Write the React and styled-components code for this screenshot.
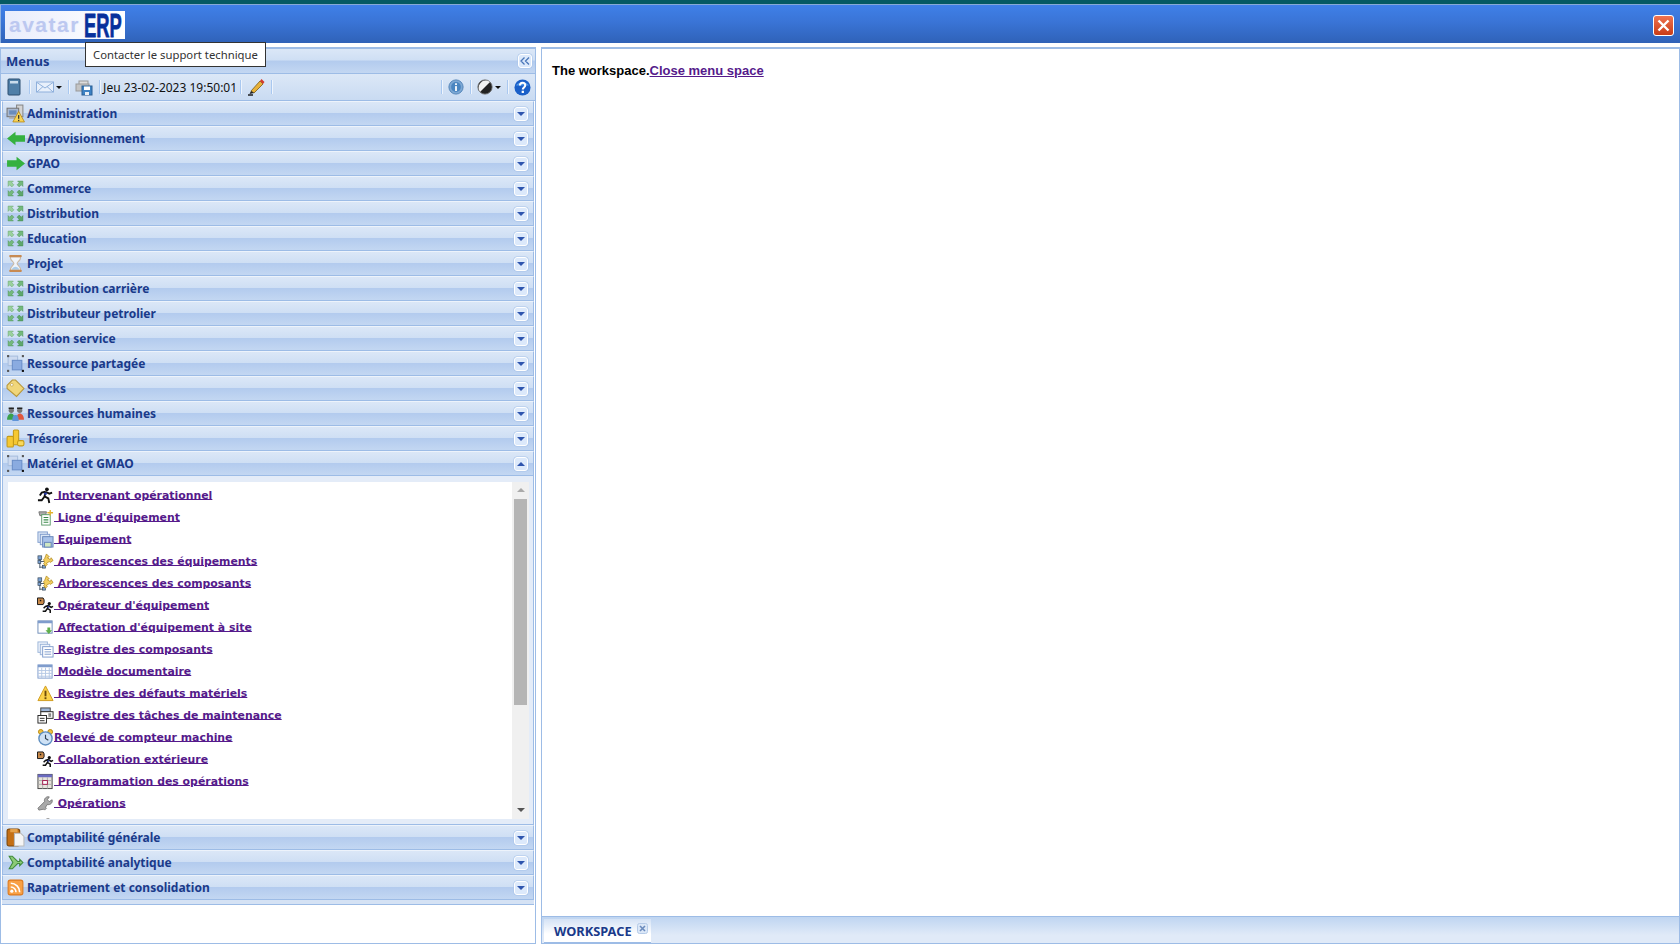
import React from 'react';
import styled, { createGlobalStyle } from 'styled-components';

const GlobalStyle = createGlobalStyle`
  html, body {
    margin: 0;
    padding: 0;
    height: 100%;
    overflow: hidden;
    background: #fff;
  }
`;

const stripe = 'linear-gradient(180deg, #dbe7f7 0%, #cfdff4 46%, #b3cbee 50%, #c3d7f2 100%)';

const Page = styled.div`
  position: relative;
  display: flex;
  flex-flow: column;
  width: 1680px;
  height: 944px;
  overflow: hidden;
  background: #fff;
  font-family: 'Noto Sans', sans-serif;
`;

const TopStrip = styled.div`
  flex: none;
  height: 4px;
  border-bottom: 1px solid #86a9d6;
  background: #055a63;
`;

const Banner = styled.div`
  flex: none;
  display: flex;
  align-items: center;
  justify-content: space-between;
  box-sizing: border-box;
  height: 38px;
  padding: 4px 6px 2px 4px;
  border-left: 1px solid #8fb2e2;
  background: linear-gradient(180deg, #3f80e8 0%, #3a74d6 45%, #2f62b8 100%);
`;

const Logo = styled.div`
  display: flex;
  align-items: center;
  box-sizing: border-box;
  width: 120px;
  height: 28px;
  padding-left: 4px;
  background: linear-gradient(90deg, #e9edfc, #fff);
`;

const LogoSoft = styled.span`
  flex: none;
  width: 75px;
  font-family: 'Liberation Sans', sans-serif;
  font-size: 21px;
  font-weight: 700;
  letter-spacing: 1.5px;
  line-height: 28px;
  color: #bcc8f0;
  text-shadow: 0 0 2px #e4e9fb;
`;

const LogoHard = styled.span`
  flex: none;
  width: 38px;
  font-family: 'Liberation Sans', sans-serif;
  font-size: 34px;
  font-weight: 700;
  line-height: 28px;
  color: #07309c;
  -webkit-text-stroke: 0.8px #07309c;
  transform: scaleX(0.54);
  transform-origin: left center;
`;

const CloseButton = styled.div`
  display: flex;
  align-items: center;
  justify-content: center;
  width: 19px;
  height: 19px;
  border: 1px solid #fff;
  border-radius: 3px;
  background: linear-gradient(180deg, #ef7350, #c93c16);
`;

const Gap = styled.div`
  flex: none;
  height: 4px;
  background: #fff;
`;

const Main = styled.div`
  flex: 1;
  display: flex;
  min-height: 0;
`;

const LeftPanel = styled.aside`
  flex: none;
  display: flex;
  flex-flow: column;
  box-sizing: border-box;
  width: 536px;
  border: 1px solid #9dbce6;
  border-top: 0;
  background: #fff;
`;

const PanelHeader = styled.div`
  flex: none;
  display: flex;
  align-items: center;
  justify-content: space-between;
  box-sizing: border-box;
  height: 27px;
  padding: 0 3px 0 5px;
  border-top: 2px solid #9dbce6;
  border-bottom: 1px solid #9dbce6;
  background: ${stripe};
`;

const PanelTitle = styled.span`
  font-size: 13px;
  font-weight: 700;
  color: #1a3a8a;
`;

const Toolbar = styled.div`
  flex: none;
  display: flex;
  align-items: center;
  box-sizing: border-box;
  height: 27px;
  padding: 0 4px;
  border-bottom: 1px solid #9dbce6;
  background: linear-gradient(180deg, #dce8f7, #c9dbf2);
`;

const ToolGroup = styled.div`
  display: flex;
  align-items: center;
  gap: ${p => p.$gap || 6}px;
  margin-left: ${p => (p.$push ? 'auto' : '0')};
`;

const ToolSep = styled.span`
  width: 1px;
  height: 14px;
  background: #a9c8f0;
  box-shadow: 1px 0 0 #eef4fc;
`;

const DateText = styled.span`
  font-size: 12px;
  color: #111;
  white-space: nowrap;
`;

const Caret = styled.span`
  width: 0;
  height: 0;
  margin-left: -1px;
  border: 3px solid transparent;
  border-top: 3px solid #111;
  border-bottom: 0;
`;

const Row = styled.div`
  flex: none;
  display: flex;
  align-items: center;
  box-sizing: border-box;
  height: 25px;
  margin: 0 1px;
  padding: 0 5px 0 3px;
  border: 1px solid #9dbce6;
  border-top-color: #edf3fb;
  background: ${stripe};
`;

const RowIcon = styled.span`
  flex: none;
  display: flex;
  width: 19px;
  height: 19px;
  margin-right: 2px;
`;

const RowTitle = styled.span`
  flex: 1;
  font-size: 12px;
  font-weight: 700;
  color: #1a3a8a;
  white-space: nowrap;
`;

const ArrowButton = styled.span`
  flex: none;
  display: flex;
  align-items: center;
  justify-content: center;
  box-sizing: border-box;
  width: 14px;
  height: 14px;
  border: 1px solid #fff;
  border-radius: 3px;
  background: #dce9fb;
  box-shadow: 0 0 0 0.5px #a8c4ea;
`;

const ArrowDown = styled.span`
  width: 0;
  height: 0;
  border: 4px solid transparent;
  border-bottom: 0;
  border-top: 4px solid #2e55ae;
`;

const ArrowUp = styled.span`
  width: 0;
  height: 0;
  border: 4px solid transparent;
  border-top: 0;
  border-bottom: 4px solid #2e55ae;
`;

const MenuBody = styled.div`
  flex: none;
  display: flex;
  box-sizing: border-box;
  height: 349px;
  margin: 0 1px;
  padding: 6px 4px 5px 5px;
  border: 1px solid #9dbce6;
  border-top: 0;
  background: #e4ecf8;
`;

const ListClip = styled.div`
  flex: 1;
  min-width: 0;
  overflow: hidden;
  background: #fff;
`;

const MenuList = styled.ul`
  margin: 0;
  padding: 2px 0 0 29px;
  list-style: none;
`;

const MenuItem = styled.li`
  display: flex;
  align-items: center;
  height: 22px;
`;

const ItemLink = styled.a`
  font-family: 'DejaVu Sans', sans-serif;
  font-size: 10.9px;
  font-weight: 700;
  color: #551a8b;
  text-decoration: underline;
  white-space: pre;
`;

const ItemIcon = styled.span`
  display: inline-flex;
  width: 17px;
  height: 17px;
  vertical-align: middle;
`;

const ScrollTrack = styled.div`
  flex: none;
  display: flex;
  flex-flow: column;
  align-items: center;
  box-sizing: border-box;
  width: 17px;
  padding: 6px 0 7px;
  background: #f0f0f0;
`;

const ScrollThumb = styled.div`
  width: 13px;
  height: 206px;
  margin-top: 7px;
  background: #b5b5b5;
`;

const ScrollUp = styled.span`
  width: 0;
  height: 0;
  border: 4px solid transparent;
  border-top: 0;
  border-bottom: 4px solid #aaa;
`;

const ScrollDown = styled.span`
  width: 0;
  height: 0;
  margin-top: auto;
  border: 4px solid transparent;
  border-bottom: 0;
  border-top: 4px solid #555;
`;

const PanelFoot = styled.div`
  flex: none;
  height: 4px;
  margin: 0 1px;
  background: #d5e2f4;
  border-bottom: 1px solid #9dbce6;
`;

const Gutter = styled.div`
  flex: none;
  width: 5px;
`;

const Workspace = styled.main`
  flex: 1;
  display: flex;
  flex-flow: column;
  min-width: 0;
  border: 1px solid #9dbce6;
  border-top: 2px solid #9dbce6;
`;

const WorkspaceBody = styled.div`
  flex: 1;
  padding: 14px 10px;
  font-family: 'Liberation Sans', sans-serif;
  font-size: 13px;
  font-weight: 700;
  line-height: 16px;
  color: #000;
`;

const WorkspaceLink = styled.a`
  color: #551a8b;
  text-decoration: underline;
`;

const TabBar = styled.div`
  flex: none;
  display: flex;
  align-items: flex-end;
  box-sizing: border-box;
  height: 27px;
  padding: 2px 0 0 2px;
  border-top: 1px solid #9dbce6;
  background: linear-gradient(180deg, #bfd5f1, #e0eaf8 70%);
`;

const Tab = styled.div`
  display: flex;
  align-items: center;
  box-sizing: border-box;
  width: 107px;
  height: 24px;
  padding: 1px 0 0 10px;
  border-bottom: 1px solid #9dbce6;
  background: linear-gradient(180deg, #d4e2f5, #fff 65%);
`;

const TabTitle = styled.span`
  font-size: 12.8px;
  font-weight: 700;
  color: #1a3a8a;
`;

const TabClose = styled.span`
  display: flex;
  margin: -6px 0 0 5px;
`;

const Tooltip = styled.div`
  position: absolute;
  top: 42px;
  left: 85px;
  box-sizing: border-box;
  height: 25px;
  padding: 0 7px;
  border: 1px solid #333;
  background: #fff;
  font-size: 11.3px;
  line-height: 23px;
  color: #333;
  white-space: nowrap;
`;

const Svg = ({ children, size = 18 }) => (
  <svg width={size} height={size} viewBox="0 0 18 18" xmlns="http://www.w3.org/2000/svg">
    {children}
  </svg>
);

const drawings = {
  book: (
    <>
      <rect x="3" y="1" width="12" height="16" rx="1" fill="#4f7fa8" stroke="#2d4f70" />
      <rect x="5" y="3" width="8" height="2.5" fill="#c9dcec" />
    </>
  ),
  mail: (
    <>
      <rect x="0.5" y="4" width="17" height="10" fill="#e8f0fb" stroke="#8fb0dc" />
      <path d="M1 4.5 9 10l8-5.5M1 14l6-5.5M17 14l-6-5.5" fill="none" stroke="#8fb0dc" />
    </>
  ),
  print: (
    <>
      <rect x="4" y="3" width="9" height="4" fill="#ddd" stroke="#999" />
      <rect x="1" y="6" width="13" height="7" fill="#c4c4c4" stroke="#999" />
      <rect x="7" y="8" width="10" height="9" fill="#3d82c4" stroke="#2b5f94" />
      <rect x="9" y="8.5" width="6" height="3.5" fill="#fff" />
      <rect x="10" y="14" width="4" height="3" fill="#e8eef5" />
    </>
  ),
  pencil: (
    <>
      <path d="M4 13 13 3l3 3-9 9z" fill="#e8b23a" stroke="#7a5a16" strokeWidth="0.8" />
      <path d="M13 3l3 3 1.500-2-3-3z" fill="#d43b2c" />
      <path d="M1 17h5" stroke="#111" strokeWidth="1.4" />
      <path d="M2.500 16 4 13l3 2z" fill="#222" />
    </>
  ),
  info: (
    <>
      <circle cx="9" cy="9" r="8" fill="#7da8d4" stroke="#4d7fb5" />
      <circle cx="9" cy="9" r="5.500" fill="#4a85c0" />
      <rect x="8" y="8" width="2" height="5.500" fill="#fff" />
      <rect x="8" y="4.800" width="2" height="2" fill="#fff" />
    </>
  ),
  contrast: (
    <>
      <circle cx="9" cy="9" r="8" fill="#222" stroke="#666" />
      <path d="M3.400 14.600A8 8 0 0 1 14.600 3.400z" fill="#f2f2f2" />
    </>
  ),
  help: (
    <>
      <circle cx="9" cy="9" r="8.500" fill="#1a5fc8" />
      <path d="M2 7a7.500 5 0 0 1 14 0z" fill="#4d94e6" />
      <path d="M6.300 7c0-4 5.600-4 5.600-.4 0 2.300-2.600 2.400-2.600 4.400" fill="none" stroke="#fff" strokeWidth="2.200" />
      <rect x="8.100" y="12.400" width="2.400" height="2.400" fill="#fff" />
    </>
  ),
  admin: (
    <>
      <rect x="10" y="1" width="6" height="11" fill="#d4d4d4" stroke="#888" />
      <rect x="1" y="4" width="11" height="8" fill="#a8b8d0" stroke="#777" />
      <rect x="3" y="6" width="7" height="4" fill="#6a8cbc" />
      <rect x="3" y="12" width="7" height="2" fill="#aaa" />
      <path d="M12 7l5.500 10h-11z" fill="#f8d456" stroke="#b88a18" strokeWidth="0.8" />
      <rect x="11.400" y="10.500" width="1.200" height="3.500" fill="#333" />
      <rect x="11.400" y="15" width="1.200" height="1.200" fill="#333" />
    </>
  ),
  left: <path d="M1 9 9 2.500V6h9v6H9v3.500z" fill="#35b13f" />,
  right: <path d="M18 9 10 2.500V6H1v6h9v3.500z" fill="#35b13f" />,
  arrows: (
    <>
      <path d="M2 2h5L5.500 3.500l2 2-2 2-2-2L2 7z" fill="#9ad19d" stroke="#6aa870" strokeWidth="0.5" />
      <path d="M16 2h-5l1.500 1.500-2 2 2 2 2-2L16 7z" fill="#74b97c" stroke="#4e9459" strokeWidth="0.5" />
      <path d="M2 16h5l-1.500-1.500 2-2-2-2-2 2L2 11z" fill="#74b97c" stroke="#4e9459" strokeWidth="0.5" />
      <path d="M16 16h-5l1.500-1.500-2-2 2-2 2 2L16 11z" fill="#5ea76b" stroke="#3f8a4b" strokeWidth="0.5" />
    </>
  ),
  hourglass: (
    <>
      <path d="M4 2.500h10c0 4-3.500 5-3.500 6.500s3.500 2.500 3.500 6.500H4c0-4 3.500-5 3.500-6.500S4 6.500 4 2.500z" fill="#f0f4fa" stroke="#c8b8a4" />
      <path d="M5.500 15c0-2 2.500-3 3.500-3s3.500 1 3.500 3z" fill="#a8cbea" />
      <rect x="3" y="1" width="12" height="2" rx="1" fill="#c78a52" />
      <rect x="3" y="15" width="12" height="2" rx="1" fill="#c78a52" />
    </>
  ),
  resource: (
    <>
      <rect x="2" y="2" width="9" height="9" fill="#ccdaf0" stroke="#a8bedd" />
      <rect x="6" y="6" width="9" height="9" fill="#8aabe0" stroke="#6a8ec8" />
      <rect x="1" y="1" width="2" height="2" fill="#555" />
      <rect x="15" y="1" width="2" height="2" fill="#555" />
      <rect x="1" y="15" width="2" height="2" fill="#555" />
      <rect x="15" y="15" width="2" height="2" fill="#111" />
    </>
  ),
  tag: (
    <>
      <path d="M1 6 6 1h3l8 8-7 7.500L1 9z" fill="#f0d67a" stroke="#b8973a" />
      <circle cx="5.500" cy="5.500" r="1.300" fill="#fff" stroke="#b8973a" strokeWidth="0.6" />
    </>
  ),
  people: (
    <>
      <circle cx="5" cy="6" r="2.500" fill="#777" />
      <circle cx="13" cy="6" r="2.500" fill="#777" />
      <path d="M2.500 4h5M10.500 4h5" stroke="#222" strokeWidth="1.500" />
      <path d="M1 15c0-4 2-6 4-6s3 2 3 6z" fill="#3aa14a" />
      <path d="M10 15c0-4 1-6 3-6s4 2 4 6z" fill="#e0563c" />
      <path d="M6 16c0-4 1-5.500 3-5.500s3 1.500 3 5.500z" fill="#5f94d8" />
    </>
  ),
  coins: (
    <>
      <rect x="7" y="1" width="5" height="14" rx="1" fill="#f6c832" stroke="#c49a18" />
      <rect x="1" y="7" width="6" height="10" rx="1" fill="#f6c832" stroke="#c49a18" />
      <rect x="11" y="11" width="6" height="5" rx="1.500" fill="#f9d95c" stroke="#c49a18" />
    </>
  ),
  ledger: (
    <>
      <rect x="1" y="1" width="12" height="16" rx="2" fill="#c46f14" stroke="#7d4708" />
      <rect x="4" y="1" width="7" height="3" fill="#e6a24a" />
      <path d="M8 5h6l3 3v9H8z" fill="#f5f5f5" stroke="#bbb" />
    </>
  ),
  branch: (
    <path d="M3 3h3l5 5h2V6l3 3-3 3v-2h-2l-5 5H3l3.500-6L3 3z" fill="#8ccb78" stroke="#3f8a3a" strokeWidth="1" />
  ),
  rss: (
    <>
      <rect x="2" y="2" width="14" height="14" rx="2" fill="#f8a045" stroke="#dd7a1f" />
      <circle cx="5.500" cy="12.500" r="1.500" fill="#fff" />
      <path d="M4.500 8.500a5 5 0 0 1 5 5M4.500 5a8.500 8.500 0 0 1 8.500 8.500" fill="none" stroke="#fff" strokeWidth="1.500" />
    </>
  ),
  runner: (
    <>
      <circle cx="10.500" cy="2.500" r="2" fill="#111" />
      <path d="M9 5 5 6 3 9M9 5l4 2 3-1M9 5l-1 5 4 2 1 5M8 10l-3 4H1" fill="none" stroke="#111" strokeWidth="2" />
      <path d="M7.500 7h3" stroke="#2b3fae" strokeWidth="2" />
    </>
  ),
  trash: (
    <>
      <path d="M2 3h8l-1 4H3z" fill="#aaa" stroke="#777" />
      <rect x="5" y="6" width="9" height="11" fill="#fff" stroke="#5c9a6a" />
      <path d="M7 9h5M7 11.500h5M7 14h5" stroke="#3a8a4a" strokeWidth="1.200" />
      <path d="M14 1v6M11 4h6" stroke="#e3b32c" strokeWidth="1.400" />
    </>
  ),
  stackSave: (
    <>
      <rect x="1" y="1" width="10" height="11" fill="#dbe6f5" stroke="#7f9ccc" />
      <rect x="3.500" y="3.500" width="10" height="11" fill="#dbe6f5" stroke="#7f9ccc" />
      <rect x="6" y="6" width="11" height="11" fill="#a8c2ea" stroke="#6484b8" />
      <rect x="8" y="12" width="7" height="5" fill="#cfe7c2" stroke="#6484b8" />
    </>
  ),
  tree: (
    <>
      <path d="M3 5v11M3 9h5M3 15h5" stroke="#456" fill="none" />
      <rect x="1" y="3" width="4" height="4" fill="#7aa0d0" stroke="#345" strokeWidth="0.7" />
      <rect x="1" y="8" width="3" height="3" fill="#7aa0d0" stroke="#345" strokeWidth="0.7" />
      <rect x="6" y="13" width="3" height="3" fill="#7aa0d0" stroke="#345" strokeWidth="0.7" />
      <path d="M10 1l3 3-2 1 3 2 1-2 2 3-3 2-1-1-3 2 1 1-2 2-2-3 1-1-1-3 1-1z" fill="#f3cf62" stroke="#b28a1e" strokeWidth="0.8" />
    </>
  ),
  operator: (
    <>
      <path d="M0.500 1h6l1 2v3l-1 2h-6z" fill="#c98a4a" stroke="#111" />
      <rect x="3" y="3" width="1.500" height="1.500" fill="#111" />
      <circle cx="13" cy="7" r="1.700" fill="#111" />
      <path d="M12 9l-3 1-2 2M12 9l3 2 2-1M12 9l-1 3 3 2v3M11 12l-2 3H6" fill="none" stroke="#111" strokeWidth="1.600" />
      <path d="M11 10.500h2" stroke="#2b3fae" strokeWidth="1.500" />
    </>
  ),
  windowDown: (
    <>
      <rect x="1" y="2" width="15" height="13" fill="#fff" stroke="#6d8cb8" />
      <rect x="1" y="2" width="15" height="2.500" fill="#7f9ccc" />
      <path d="M11 9h3v3h2l-3.500 4L9 12h2z" fill="#5fae4a" />
    </>
  ),
  stackTable: (
    <>
      <rect x="1" y="1" width="10" height="11" fill="#eef3fb" stroke="#9bb4d8" />
      <rect x="3.500" y="3.500" width="10" height="11" fill="#eef3fb" stroke="#9bb4d8" />
      <rect x="6" y="6" width="11" height="11" fill="#fff" stroke="#7f9ccc" />
      <path d="M8 9h7M8 11.500h7M8 14h7" stroke="#7f9ccc" />
    </>
  ),
  table: (
    <>
      <rect x="1" y="2" width="15" height="14" fill="#fff" stroke="#7f9ccc" />
      <rect x="1" y="2" width="15" height="2.500" fill="#7f9ccc" />
      <path d="M1 8h15M1 11h15M1 14h15M5 5v11M9 5v11M13 5v11" stroke="#b5c8e4" />
    </>
  ),
  warning: (
    <>
      <path d="M9 1l8 15.500H1z" fill="#fbd24a" stroke="#cf9a1c" strokeLinejoin="round" />
      <rect x="8" y="6" width="2" height="6" fill="#6b4a0a" />
      <rect x="8" y="13" width="2" height="2" fill="#6b4a0a" />
    </>
  ),
  tasks: (
    <>
      <rect x="4" y="1" width="10" height="4" fill="#9db5d8" stroke="#444" />
      <rect x="4" y="5" width="13" height="7" fill="#fff" stroke="#222" />
      <rect x="1" y="9" width="9" height="8" fill="#fff" stroke="#222" />
      <path d="M3 12h5M3 14.500h5M12 7.500h3M12 9.500h3" stroke="#222" />
    </>
  ),
  clock: (
    <>
      <circle cx="4" cy="3" r="2.500" fill="#f0c040" stroke="#b98a10" />
      <circle cx="14" cy="3" r="2.500" fill="#f0c040" stroke="#b98a10" />
      <circle cx="9" cy="10" r="7" fill="#cfe2f5" stroke="#5f8fc0" strokeWidth="1.500" />
      <path d="M9 6v4l3 2" fill="none" stroke="#345" strokeWidth="1.200" />
    </>
  ),
  calendar: (
    <>
      <rect x="1" y="1.500" width="15" height="15" fill="#e8e4dc" stroke="#444" />
      <rect x="1" y="1.500" width="15" height="3" fill="#6a6ac0" />
      <path d="M1 8h15M1 12h15M6 4.500v12M11 4.500v12" stroke="#aaa" />
      <rect x="6" y="8" width="5" height="4" fill="#fff" stroke="#a3174a" />
    </>
  ),
  wrench: (
    <path d="M2 16l-1-2 7-7c-1-3 2-6 5-5l-2 3 2 2 3-2c1 3-2 6-5 5l-2 3 1 1-2 2-1-1z" fill="#aaa" stroke="#666" strokeWidth="0.8" />
  ),
};

const Drawing = ({ name, size }) => <Svg size={size}>{drawings[name]}</Svg>;

const topRows = [
  ['Administration', 'admin'],
  ['Approvisionnement', 'left'],
  ['GPAO', 'right'],
  ['Commerce', 'arrows'],
  ['Distribution', 'arrows'],
  ['Education', 'arrows'],
  ['Projet', 'hourglass'],
  ['Distribution carrière', 'arrows'],
  ['Distributeur petrolier', 'arrows'],
  ['Station service', 'arrows'],
  ['Ressource partagée', 'resource'],
  ['Stocks', 'tag'],
  ['Ressources humaines', 'people'],
  ['Trésorerie', 'coins'],
];

const bottomRows = [
  ['Comptabilité générale', 'ledger'],
  ['Comptabilité analytique', 'branch'],
  ['Rapatriement et consolidation', 'rss'],
];

const items = [
  [' Intervenant opérationnel', 'runner'],
  [" Ligne d'équipement", 'trash'],
  [' Equipement', 'stackSave'],
  [' Arborescences des équipements', 'tree'],
  [' Arborescences des composants', 'tree'],
  [" Opérateur d'équipement", 'operator'],
  [" Affectation d'équipement à site", 'windowDown'],
  [' Registre des composants', 'stackTable'],
  [' Modèle documentaire', 'table'],
  [' Registre des défauts matériels', 'warning'],
  [' Registre des tâches de maintenance', 'tasks'],
  ['Relevé de compteur machine', 'clock'],
  [' Collaboration extérieure', 'operator'],
  [' Programmation des opérations', 'calendar'],
  [' Opérations', 'wrench'],
];

const AccordionRow = ({ title, icon, open }) => (
  <Row>
    <RowIcon>
      <Drawing name={icon} size={19} />
    </RowIcon>
    <RowTitle>{title}</RowTitle>
    <ArrowButton>{open ? <ArrowUp /> : <ArrowDown />}</ArrowButton>
  </Row>
);

const App = () => {
  return (
    <Page>
      <GlobalStyle />
      <TopStrip />
      <Banner>
        <Logo>
          <LogoSoft>avatar</LogoSoft>
          <LogoHard>ERP</LogoHard>
        </Logo>
        <CloseButton>
          <svg width="13" height="13" viewBox="0 0 13 13">
            <path d="M1.500 1.500l10 10M11.500 1.500l-10 10" stroke="#fff" strokeWidth="2.400" />
          </svg>
        </CloseButton>
      </Banner>
      <Gap />
      <Main>
        <LeftPanel>
          <PanelHeader>
            <PanelTitle>Menus</PanelTitle>
            <ArrowButton>
              <svg width="10" height="10" viewBox="0 0 10 10">
                <path d="M4.500 1.500 1 5l3.500 3.500M9 1.500 5.500 5 9 8.500" fill="none" stroke="#4a76b8" strokeWidth="1.300" />
              </svg>
            </ArrowButton>
          </PanelHeader>
          <Toolbar>
            <ToolGroup>
              <Drawing name="book" size={18} />
              <ToolSep />
              <ToolGroup $gap={3}>
                <Drawing name="mail" size={18} />
                <Caret />
              </ToolGroup>
              <ToolSep />
              <Drawing name="print" size={18} />
              <ToolSep />
            </ToolGroup>
            <DateText>&nbsp;Jeu 23-02-2023 19:50:01&nbsp;</DateText>
            <ToolGroup>
              <ToolSep />
              <Drawing name="pencil" size={18} />
              <ToolSep />
            </ToolGroup>
            <ToolGroup $push>
              <ToolSep />
              <Drawing name="info" size={16} />
              <ToolSep />
              <ToolGroup $gap={3}>
                <Drawing name="contrast" size={16} />
                <Caret />
              </ToolGroup>
              <ToolSep />
              <Drawing name="help" size={17} />
            </ToolGroup>
          </Toolbar>
          {topRows.map(([title, icon]) => (
            <AccordionRow key={title} title={title} icon={icon} />
          ))}
          <AccordionRow title="Matériel et GMAO" icon="resource" open />
          <MenuBody>
            <ListClip>
              <MenuList>
                {items.map(([label, icon]) => (
                  <MenuItem key={label}>
                    <ItemLink href="#">
                      <ItemIcon>
                        <Drawing name={icon} size={17} />
                      </ItemIcon>
                      {label}
                    </ItemLink>
                  </MenuItem>
                ))}
                <MenuItem>
                  <ItemIcon>
                    <Drawing name="wrench" size={17} />
                  </ItemIcon>
                </MenuItem>
              </MenuList>
            </ListClip>
            <ScrollTrack>
              <ScrollUp />
              <ScrollThumb />
              <ScrollDown />
            </ScrollTrack>
          </MenuBody>
          {bottomRows.map(([title, icon]) => (
            <AccordionRow key={title} title={title} icon={icon} />
          ))}
          <PanelFoot />
        </LeftPanel>
        <Gutter />
        <Workspace>
          <WorkspaceBody>
            The workspace.<WorkspaceLink href="#">Close menu space</WorkspaceLink>
          </WorkspaceBody>
          <TabBar>
            <Tab>
              <TabTitle>WORKSPACE</TabTitle>
              <TabClose>
                <svg width="11" height="11" viewBox="0 0 11 11">
                  <rect x="0.500" y="0.500" width="10" height="10" rx="2" fill="#dbe7f7" stroke="#b5cbe8" />
                  <path d="M3 3l5 5M8 3l-5 5" stroke="#6b8bbd" strokeWidth="1.600" />
                </svg>
              </TabClose>
            </Tab>
          </TabBar>
        </Workspace>
      </Main>
      <Tooltip>Contacter le support technique</Tooltip>
    </Page>
  );
};

export default App;
